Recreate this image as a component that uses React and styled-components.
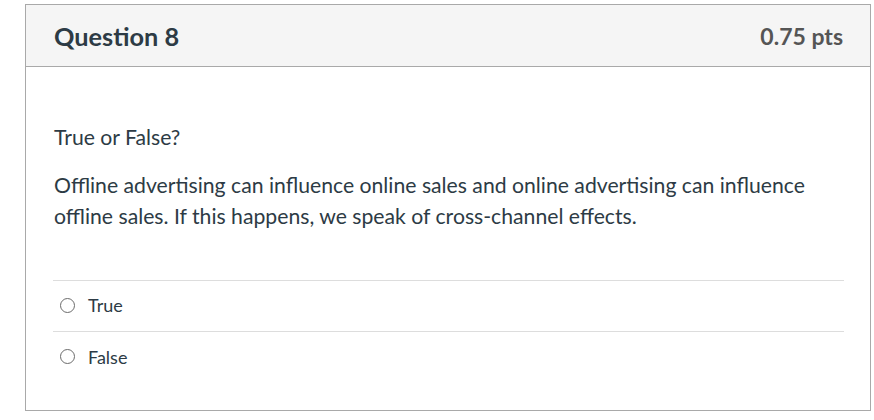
import React from "react";
import styled, { createGlobalStyle } from "styled-components";

const GlobalStyle = createGlobalStyle`
  body {
    margin: 0;
    background: #ffffff;
    font-family: Lato, "Liberation Sans", sans-serif;
  }
`;

const answers = ["True", "False"];

const App = () => {
  return (
    <Page>
      <GlobalStyle />
      <Card>
        <Header>
          <Title>Question 8</Title>
          <Points>0.75 pts</Points>
        </Header>
        <Body>
          <Text>True or False?</Text>
          <Text>
            Offline advertising can influence online sales and online advertising can influence
            offline sales. If this happens, we speak of cross-channel effects.
          </Text>
          <Answers>
            {answers.map((a) => (
              <Answer key={a}>
                <Radio />
                <AnswerLabel>{a}</AnswerLabel>
              </Answer>
            ))}
          </Answers>
        </Body>
      </Card>
    </Page>
  );
};

export default App;

const Page = styled.div`
  padding: 4px 0 0 25px;
`;

const Card = styled.div`
  box-sizing: border-box;
  width: 846px;
  height: 407px;
  border: 1px solid #a9a9a9;
  background: #ffffff;
`;

const Header = styled.div`
  display: flex;
  justify-content: space-between;
  align-items: center;
  height: 61px;
  padding: 0 27px 0 28px;
  background: #f5f5f5;
  border-bottom: 1px solid #a9a9a9;
`;

const Title = styled.div`
  font-size: 25.3px;
  font-weight: 700;
  color: #2d3b45;
`;

const Points = styled.div`
  font-size: 23px;
  font-weight: 700;
  color: #555555;
`;

const Body = styled.div`
  padding: 55px 26px 0 28px;
`;

const Text = styled.p`
  margin: 0 0 17px;
  font-size: 21.2px;
  line-height: 31px;
  color: #2d3b45;
`;

const Answers = styled.div`
  margin: 48px 0 0 -1px;
  border-top: 1px solid #dddddd;
`;

const Answer = styled.label`
  display: flex;
  align-items: center;
  box-sizing: border-box;
  height: 51px;
  padding: 0 0 2px 7px;
  border-bottom: 1px solid #dddddd;
  &:last-child {
    border-bottom: none;
  }
`;

const Radio = styled.span`
  box-sizing: border-box;
  width: 15px;
  height: 15px;
  border: 1px solid #6b6b6b;
  border-radius: 50%;
  margin-right: 13px;
`;

const AnswerLabel = styled.span`
  font-size: 18px;
  color: #2d3b45;
`;
